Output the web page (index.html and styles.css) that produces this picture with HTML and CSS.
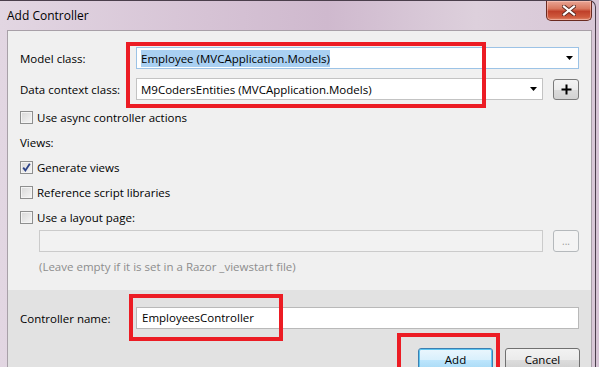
FILE: index.html
```html
<!DOCTYPE html>
<html lang="en">
<head>
    <meta charset="UTF-8">
    <title>Add Controller</title>
    <link rel="stylesheet" href="styles.css">
</head>
<body>
    <div class="window">
        <!-- title bar -->
        <div class="titlebar">
            <span class="title">Add Controller</span>
            <button class="close" title="Close">
                <svg width="14" height="11" viewBox="0 0 14 11">
                    <path d="M2 1.5 L12 9.5 M12 1.5 L2 9.5" stroke="#5b2a22" stroke-width="4" stroke-linecap="square"/>
                    <path d="M2 1.5 L12 9.5 M12 1.5 L2 9.5" stroke="#ffffff" stroke-width="2.2" stroke-linecap="square"/>
                </svg>
            </button>
        </div>

        <div class="client">
            <div class="main">
                <div class="field-row">
                    <label class="label">Model class:</label>
                    <div class="combo focused">
                        <span class="selected">Employee (MVCApplication.Models)</span>
                        <svg class="arrow" width="7" height="4" viewBox="0 0 7 4"><path d="M0 0 H7 L3.5 4 Z" fill="#000"/></svg>
                    </div>
                </div>

                <div class="field-row second">
                    <label class="label">Data context class:</label>
                    <div class="combo">
                        <span>M9CodersEntities (MVCApplication.Models)</span>
                        <svg class="arrow" width="7" height="4" viewBox="0 0 7 4"><path d="M0 0 H7 L3.5 4 Z" fill="#000"/></svg>
                    </div>
                    <button class="small-btn">
                        <svg width="11" height="11" viewBox="0 0 11 11"><path d="M5.5 0.5 V10.5 M0.5 5.5 H10.5" stroke="#000" stroke-width="2"/></svg>
                    </button>
                </div>

                <div class="check-list">
                    <div class="check-row"><span class="checkbox"></span>Use async controller actions</div>
                    <div class="check-row">Views:</div>
                    <div class="check-row">
                        <span class="checkbox">
                            <svg width="9" height="9" viewBox="0 0 9 9"><path d="M1.2 4.6 L3.4 7.4 L7.8 0.8" fill="none" stroke="#2c4287" stroke-width="1.8"/></svg>
                        </span>Generate views
                    </div>
                    <div class="check-row"><span class="checkbox"></span>Reference script libraries</div>
                    <div class="check-row"><span class="checkbox"></span>Use a layout page:</div>
                </div>

                <div class="layout-row">
                    <div class="textbox disabled"></div>
                    <button class="small-btn dots">...</button>
                </div>
                <div class="hint">(Leave empty if it is set in a Razor _viewstart file)</div>
            </div>

            <div class="footer">
                <div class="field-row">
                    <label class="label">Controller name:</label>
                    <div class="textbox">EmployeesController</div>
                </div>
                <div class="buttons">
                    <button class="btn primary">Add</button>
                    <button class="btn">Cancel</button>
                </div>
            </div>
        </div>
    </div>

    <!-- red annotation boxes -->
    <div class="mark mark-model"></div>
    <div class="mark mark-name"></div>
    <div class="mark mark-add"></div>
</body>
</html>
```

FILE: styles.css
```css
/* page */
body {
    margin: 0;
    width: 599px;
    height: 367px;
    overflow: hidden;
    position: relative;
    background: #d6c4d5;
    font-family: 'Segoe UI', 'Open Sans', sans-serif;
    font-size: 11.5px;
    color: #000;
}

/* window frame */
.window {
    width: 592px;
    height: 366px;
    padding: 0 3px 0 0;
    border-top: 1px solid #4b3f4c;
    border-right: 1px solid #4b3f4c;
    border-top-right-radius: 7px;
    background: linear-gradient(to right, #e2d6e2 0%, #d6c3d5 35%, #cfb9ce 55%, #ddd0dc 80%, #d8c7d7 100%);
    display: flex;
    flex-direction: column;
}

.titlebar {
    height: 29px;
    flex-shrink: 0;
    display: flex;
    justify-content: space-between;
    align-items: flex-start;
    padding-left: 7px;
}

.title {
    font-size: 12px;
    line-height: 30px;
}

.close {
    width: 46px;
    height: 20px;
    margin: 0;
    padding: 0;
    border: 1px solid #6a2a20;
    border-top: none;
    border-radius: 0 0 5px 5px;
    background: linear-gradient(#e9a595 0%, #d9785f 40%, #c0402a 55%, #cf5a3e 85%, #e08a6e 100%);
    box-shadow: inset 0 0 0 1px rgba(255, 210, 200, 0.5);
    display: flex;
    align-items: center;
    justify-content: center;
}

/* dialog client area */
.client {
    flex: 1;
    min-height: 0;
    margin-left: 7px;
    border: 1px solid #a8a0a8;
    border-bottom: none;
    background: #f0f0f0;
    display: flex;
    flex-direction: column;
}

.main {
    padding: 16px 12px 15px 12px;
}

.field-row {
    display: flex;
    align-items: center;
    height: 22px;
}

.field-row.second {
    margin-top: 9px;
}

.label {
    width: 116px;
    flex-shrink: 0;
}

.combo {
    flex: 1;
    height: 22px;
    box-sizing: border-box;
    border: 1px solid #c3c3c3;
    background: #fff;
    display: flex;
    align-items: center;
    justify-content: space-between;
    padding: 0 5px 0 4px;
}

.combo.focused {
    border-color: #9cc3e6;
}

.selected {
    background: #a9d0f2;
    padding: 1px 0;
}

.arrow {
    flex-shrink: 0;
}

.small-btn {
    width: 26px;
    height: 21px;
    margin: 0 0 0 10px;
    padding: 0;
    border: 1px solid #7a7a7a;
    border-radius: 3px;
    background: linear-gradient(#f4f4f4 0%, #ececec 50%, #dcdcdc 51%, #d2d2d2 100%);
    display: flex;
    align-items: center;
    justify-content: center;
    flex-shrink: 0;
}

/* checkboxes */
.check-list {
    margin-top: 5px;
}

.check-row {
    height: 25px;
    display: flex;
    align-items: center;
}

.checkbox {
    width: 13px;
    height: 13px;
    box-sizing: border-box;
    border: 1px solid #8e8f8f;
    background: linear-gradient(135deg, #d8d8d8, #f6f6f6);
    box-shadow: inset 0 0 0 1px #f4f4f4;
    margin-right: 4px;
    display: flex;
    align-items: center;
    justify-content: center;
}

.layout-row {
    display: flex;
    margin-left: 19px;
    height: 22px;
}

.textbox {
    flex: 1;
    height: 22px;
    box-sizing: border-box;
    border: 1px solid #b9b9b9;
    background: #fff;
    padding: 0 5px;
    line-height: 20px;
}

.textbox.disabled {
    background: #f2f2f2;
    border-color: #cbcbcb;
}

.dots {
    height: 22px;
    border-color: #b5b9bc;
    background: #f4f4f4;
    color: #9a9a9a;
    font-family: inherit;
    font-size: 10px;
}

.hint {
    margin: 7px 0 0 19px;
    line-height: 16px;
    color: #8d8d8d;
}

/* bottom panel */
.footer {
    flex: 1;
    min-height: 0;
    overflow: hidden;
    background: #e2e2e2;
    padding: 17px 12px 0 12px;
}

.buttons {
    display: flex;
    justify-content: flex-end;
    gap: 12px;
    margin-top: 19px;
    margin-right: -1px;
}

.btn {
    width: 75px;
    height: 23px;
    flex-shrink: 0;
    padding: 0;
    border: 1px solid #707070;
    border-radius: 3px;
    background: linear-gradient(#f2f2f2 0%, #ebebeb 50%, #dddddd 51%, #cfcfcf 100%);
    font-family: inherit;
    font-size: 11.5px;
    color: #000;
}

.btn.primary {
    border-color: #3c7fb1;
    background: linear-gradient(#eaf6fd 0%, #d9f0fc 50%, #bee6fd 51%, #a7d9f5 100%);
    box-shadow: inset 0 0 0 1px #5ec5f0;
}

/* red annotation boxes */
.mark {
    position: absolute;
    box-sizing: border-box;
    border: 4px solid #ec1c24;
}

.mark-model {
    left: 126px;
    top: 42px;
    width: 360px;
    height: 66px;
}

.mark-name {
    left: 129px;
    top: 294px;
    width: 154px;
    height: 47px;
}

.mark-add {
    left: 397px;
    top: 333px;
    width: 103px;
    height: 34px;
    border-bottom: none;
}
```
